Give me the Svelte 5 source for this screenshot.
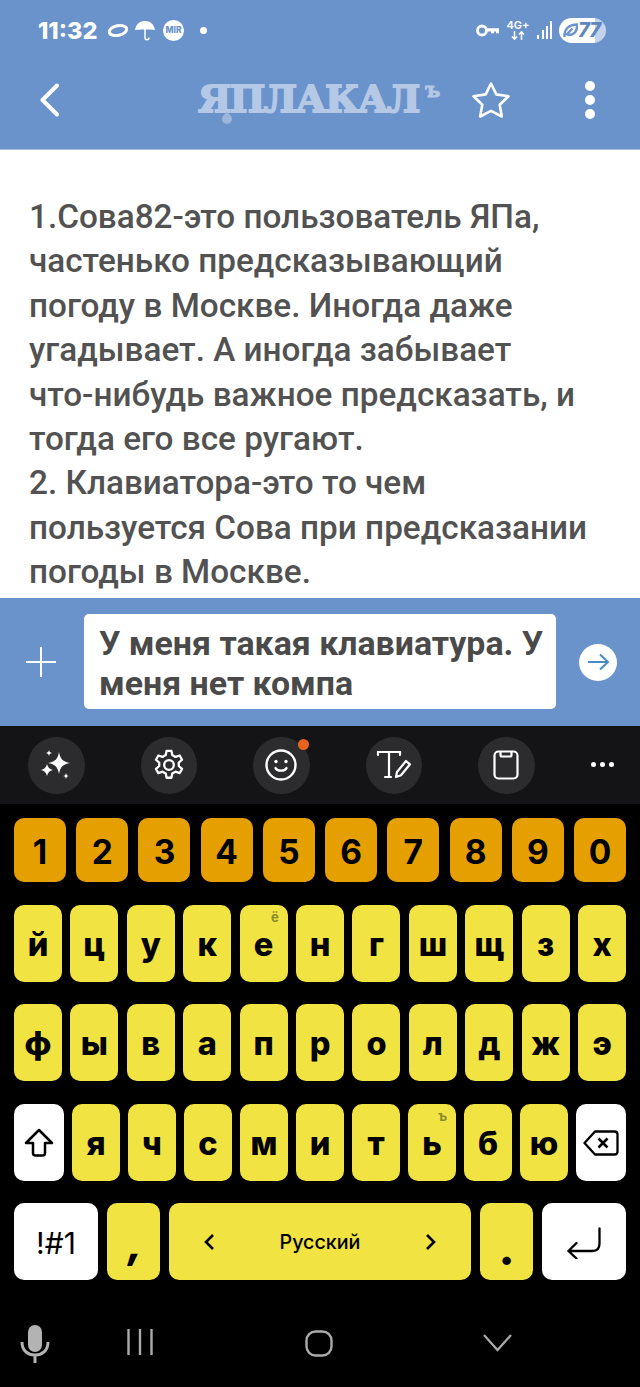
<script lang="ts">
    const digits = ["1", "2", "3", "4", "5", "6", "7", "8", "9", "0"];
    const row2 = ["й", "ц", "у", "к", "е", "н", "г", "ш", "щ", "з", "х"];
    const row3 = ["ф", "ы", "в", "а", "п", "р", "о", "л", "д", "ж", "э"];
    const row4 = ["я", "ч", "с", "м", "и", "т", "ь", "б", "ю"];
    const hints: Record<string, string> = {"е": "ё", "ь": "ъ"};
</script>

<div class="screen">
    <header class="top">
        <div class="status">
            <span class="time">11:32</span>
            <svg class="st-ring" width="22" height="15" viewBox="0 0 22 15"><ellipse cx="11" cy="7.500" rx="8.800" ry="4.800" transform="rotate(-12 11 7.500)" fill="none" stroke="#fff" stroke-width="3"/></svg>
            <svg class="st-umbrella" width="20" height="21" viewBox="0 0 20 21"><path d="M0 10C1 4 5 1 10 1s9 3 10 9c-3-.8-17-.8-20 0z" fill="#fff"/><path d="M10 8v9.500c0 3 4 3 4 0" fill="none" stroke="#fff" stroke-width="1.500"/></svg>
            <span class="st-mir">MIR</span>
            <span class="st-dot"></span>
            <span class="grow"></span>
            <svg class="st-key" width="23" height="13" viewBox="0 0 23 13"><circle cx="6" cy="6.500" r="4.500" fill="none" stroke="#fff" stroke-width="2.800"/><path d="M10 4.200h13v5h-3V7.500h-2v1.700h-3V7.500h-5z" fill="#fff"/></svg>
            <span class="st-net"><span>4G+</span><svg width="14" height="9" viewBox="0 0 14 9"><path d="M3.500 0v8M1 5.500l2.500 2.800L6 5.500M10.500 9V1M8 3.500l2.500-2.800L13 3.500" fill="none" stroke="#fff" stroke-width="1.500"/></svg></span>
            <svg class="st-signal" width="16" height="18" viewBox="0 0 16 18"><path d="M1 14h2v4H1zM6 9h2v9H6zM10 5h2v13h-2zM14 0h2v18h-2z" fill="#fff"/></svg>
            <div class="st-batt">
                <svg width="15" height="15" viewBox="0 0 15 15"><path d="M1.500 14C1 6 6 1.500 14 1.500c.5 7-3 11-9.500 10.500M3 12 9.500 5.500" fill="none" stroke="#6a93cc" stroke-width="2.400"/></svg>
                <span>77</span>
            </div>
        </div>
        <div class="bar">
            <svg class="back" width="21" height="34" viewBox="0 0 21 34"><path d="M18 2.500 3.500 17 18 31.500" fill="none" stroke="#fff" stroke-width="4" stroke-linecap="round" stroke-linejoin="round"/></svg>
            <div class="logo">
                <span class="logo-main">ЯПЛАКАЛ</span><span class="logo-sup">ъ</span>
                <span class="logo-drop"></span>
            </div>
            <svg class="star" width="40" height="38" viewBox="0 0 40 38"><path d="M20 2.500 25.300 13.400 37.500 15.200 28.700 23.700 30.800 35.500 20 29.900 9.200 35.500 11.300 23.700 2.500 15.200 14.700 13.400z" fill="none" stroke="#fff" stroke-width="2.600" stroke-linejoin="round"/></svg>
            <div class="more"><i></i><i></i><i></i></div>
        </div>
    </header>

    <main class="content">
        <p>1.Сова82-это пользователь ЯПа, частенько предсказывающий погоду в Москве. Иногда даже угадывает. А иногда забывает что-&#8288;нибудь важное предсказать, и тогда его все ругают.<br />2. Клавиатора-это то чем пользуется Сова при предсказании погоды в Москве.</p>
    </main>

    <div class="composer">
        <svg class="plus" width="30" height="30" viewBox="0 0 30 30"><path d="M15 0v30M0 15h30" stroke="#fff" stroke-width="2"/></svg>
        <div class="input">У меня такая клавиатура. У меня нет компа</div>
        <div class="send">
            <svg width="24" height="20" viewBox="0 0 24 20"><path d="M2 10h20M14 2.500 22 10l-8 7.500" fill="none" stroke="#4a8bc8" stroke-width="2"/></svg>
        </div>
    </div>

    <div class="toolbar">
        <div class="tool">
            <svg width="30" height="30" viewBox="0 0 30 30" fill="#fff"><path d="M18 2c1.200 7 4 9.800 11 11-7 1.200-9.800 4-11 11-1.200-7-4-9.800-11-11 7-1.200 9.800-4 11-11z"/><path d="M8 0c.5 2 1 2.500 3 3-2 .5-2.500 1-3 3-.5-2-1-2.500-3-3 2-.5 2.500-1 3-3zM6 14c.8 3.500 2.500 5.200 6 6-3.500.8-5.200 2.500-6 6-.8-3.500-2.500-5.200-6-6 3.500-.8 5.200-2.500 6-6zM25 23c.4 2 1 2.600 3 3-2 .4-2.600 1-3 3-.4-2-1-2.600-3-3 2-.4 2.600-1 3-3z"/></svg>
        </div>
        <div class="tool">
            <svg width="34" height="34" viewBox="0 0 24 24" fill="none" stroke="#fff" stroke-width="1.600"><circle cx="12" cy="12" r="3.400"/><path d="M10.300 2h3.400l.6 3 2.300 1.300 2.900-1 1.700 3-2.300 2v2.400l2.300 2-1.700 3-2.900-1-2.300 1.300-.6 3h-3.400l-.6-3-2.300-1.300-2.900 1-1.700-3 2.300-2v-2.400l-2.300-2 1.700-3 2.900 1 2.300-1.300z" stroke-linejoin="round"/></svg>
        </div>
        <div class="tool badge">
            <svg width="32" height="32" viewBox="0 0 32 32" fill="none" stroke="#fff" stroke-width="2.400"><circle cx="16" cy="16" r="14.500"/><circle cx="11" cy="12.500" r="1.700" fill="#fff" stroke="none"/><circle cx="21" cy="12.500" r="1.700" fill="#fff" stroke="none"/><path d="M10.500 19c1.500 3.500 9.500 3.500 11 0" stroke-linecap="round"/></svg>
        </div>
        <div class="tool">
            <svg width="36" height="30" viewBox="0 0 36 30" fill="none" stroke="#fff" stroke-width="2.200"><path d="M2 5V2h22v3M13 2v25M9 27h6" stroke-linecap="round"/><path d="M21 22 30 11l4 3.300-9 11-5 1.700z" stroke-linejoin="round"/></svg>
        </div>
        <div class="tool">
            <svg width="26" height="30" viewBox="0 0 26 30" fill="none" stroke="#fff" stroke-width="2.200"><rect x="1.500" y="1.500" width="23" height="27" rx="4"/><path d="M7.500 1.500v3.500c0 1 .5 1.500 1.500 1.500h8c1 0 1.500-.5 1.500-1.500v-3.500"/></svg>
        </div>
        <div class="tool-more"><i></i><i></i><i></i></div>
    </div>

    <div class="keyboard">
        <div class="row nums">
            {#each digits as d}
                <div class="key num">{d}</div>
            {/each}
        </div>
        <div class="row letters">
            {#each row2 as k}
                <div class="key">{k}{#if hints[k]}<span class="hint">{hints[k]}</span>{/if}</div>
            {/each}
        </div>
        <div class="row letters">
            {#each row3 as k}
                <div class="key">{k}</div>
            {/each}
        </div>
        <div class="row third">
            <div class="key white side">
                <svg width="30" height="30" viewBox="0 0 30 30"><path d="M15 2 28 15h-7v10c0 1.500-1 2.500-2.500 2.500h-7C10 27.500 9 26.500 9 25V15H2z" fill="none" stroke="#000" stroke-width="2.500" stroke-linejoin="round"/></svg>
            </div>
            {#each row4 as k}
                <div class="key">{k}{#if hints[k]}<span class="hint">{hints[k]}</span>{/if}</div>
            {/each}
            <div class="key white side">
                <svg width="36" height="26" viewBox="0 0 36 26" fill="none" stroke="#000" stroke-width="2.300"><path d="M12 1.500h19.500c2 0 3 1 3 3v17c0 2-1 3-3 3H12L1.500 13z" stroke-linejoin="round"/><path d="M15.500 8.500l9 9M24.500 8.500l-9 9" stroke-width="2.600"/></svg>
            </div>
        </div>
        <div class="row bottom">
            <div class="key white fn">!#1</div>
            <div class="key punct comma">,</div>
            <div class="key space">
                <svg width="12" height="18" viewBox="0 0 12 18"><path d="M10 2 3 9l7 7" fill="none" stroke="#000" stroke-width="2.600"/></svg>
                <span>Русский</span>
                <svg width="12" height="18" viewBox="0 0 12 18"><path d="M2 2l7 7-7 7" fill="none" stroke="#000" stroke-width="2.600"/></svg>
            </div>
            <div class="key punct dot">.</div>
            <div class="key white enter">
                <svg width="36" height="32" viewBox="0 0 36 32" fill="none" stroke="#000" stroke-width="2.300" stroke-linecap="round"><path d="M33.500 1.500v15c0 5-2 7.500-7 7.500H3M10.500 16 2.500 24l8 7.500"/></svg>
            </div>
        </div>
    </div>

    <nav class="sysnav">
        <svg class="mic" width="30" height="38" viewBox="0 0 30 38"><rect x="8" y="0" width="14" height="27" rx="7" fill="#b3b3b3"/><path d="M2 17c0 9 6 13 13 13s13-4 13-13M15 30v8" fill="none" stroke="#b3b3b3" stroke-width="3"/></svg>
        <svg class="recents" width="26" height="26" viewBox="0 0 26 26"><path d="M1.500 0v26M13 0v26M24.500 0v26" stroke="#aaa" stroke-width="2.400"/></svg>
        <svg class="home" width="28" height="27" viewBox="0 0 28 27"><rect x="1.500" y="1.500" width="25" height="24" rx="9" fill="none" stroke="#aaa" stroke-width="2.400"/></svg>
        <svg class="hide" width="29" height="18" viewBox="0 0 29 18"><path d="M1 1l13.500 15L28 1" fill="none" stroke="#aaa" stroke-width="2.200"/></svg>
    </nav>
</div>

<style>
:global(body) {
    margin: 0;
    background: #000;
}

.screen {
    width: 640px;
    height: 1387px;
    display: flex;
    flex-direction: column;
    overflow: hidden;
    font-family: Roboto, sans-serif;
}

.top {
    height: 150px;
    box-sizing: border-box;
    background: #6a93cc;
    border-bottom: 1px solid #a9bedd;
    flex: none;
}

.status {
    height: 60px;
    display: flex;
    align-items: center;
    padding: 0 34px 0 38px;
    color: #fff;
}

.grow { flex: 1; }

.time {
    font: 800 23.500px Inter, sans-serif;
    width: 58px;
    margin-right: 11px;
}

.st-ring { margin-right: 6px; }
.st-umbrella { margin-right: 8px; }

.st-mir {
    width: 21px;
    height: 21px;
    border-radius: 50%;
    background: #fff;
    color: #6a93cc;
    font: 800 8.500px/21px Inter, sans-serif;
    text-align: center;
    margin-right: 16px;
}

.st-dot {
    width: 7px;
    height: 7px;
    border-radius: 50%;
    background: #fff;
}

.st-key { margin-right: 9px; }

.st-net {
    display: flex;
    flex-direction: column;
    align-items: center;
    font: 600 11px/11px Inter, sans-serif;
    width: 20px;
    margin-right: 8px;
}

.st-signal { margin-right: 7px; }

.st-batt {
    width: 47px;
    height: 25px;
    border-radius: 13px;
    background: linear-gradient(90deg, #fff 76%, #c4d3ea 76%);
    display: flex;
    align-items: center;
    padding-left: 4px;
    box-sizing: border-box;
    color: #5f86be;
    font: italic 800 20px Inter, sans-serif;
    letter-spacing: -1px;
}

.bar {
    height: 89px;
    display: flex;
    align-items: flex-start;
    padding-left: 39px;
    position: relative;
}

.back {
    margin-top: 23px;
    margin-right: 138px;
}

.logo {
    position: relative;
    width: 243px;
    margin-top: 17px;
    color: #b5c8e5;
    white-space: nowrap;
    font-family: "DejaVu Serif", serif;
    font-weight: 700;
    line-height: 44px;
    -webkit-text-stroke: 1.800px #b5c8e5;
}

.logo-main {
    font-size: 37px;
    letter-spacing: -1.500px;
    display: inline-block;
    transform: scaleX(1.020);
    transform-origin: left;
}

.logo-sup {
    position: absolute;
    left: 227px;
    top: -9px;
    font-size: 20px;
    -webkit-text-stroke: 0.800px #b5c8e5;
}

.logo-drop {
    position: absolute;
    left: 24px;
    top: 37px;
    width: 10px;
    height: 10px;
    border-radius: 0 50% 50% 50%;
    transform: rotate(45deg);
    background: #9db6da;
}

.star {
    margin-top: 21px;
    margin-left: 30px;
}

.more {
    display: flex;
    flex-direction: column;
    gap: 4px;
    margin-top: 21px;
    margin-left: 74px;
}

.more i {
    width: 10px;
    height: 10px;
    border-radius: 50%;
    background: #fff;
}

.content {
    height: 448px;
    flex: none;
    background: #fff;
    box-sizing: border-box;
    padding: 45px 40px 0 29px;
}

.content p {
    margin: 0;
    font: 500 33.300px/44.400px Roboto, sans-serif;
    color: #525252;
}

.composer {
    height: 128px;
    flex: none;
    background: #6a93cc;
    display: flex;
    align-items: center;
    padding-left: 26px;
    box-sizing: border-box;
}

.plus { margin-right: 28px; }

.input {
    width: 472px;
    height: 95px;
    margin-top: -1px;
    box-sizing: border-box;
    background: #fff;
    border-radius: 5px;
    padding: 10px 10px 10px 15px;
    font: 700 33.900px/40px Roboto, sans-serif;
    color: #4a4a4a;
}

.send {
    width: 38px;
    height: 37px;
    border-radius: 50%;
    background: #fff;
    margin-left: 23px;
    display: flex;
    align-items: center;
    justify-content: center;
}

.toolbar {
    height: 78px;
    flex: none;
    background: #141416;
    display: flex;
    align-items: center;
    padding-left: 28px;
    gap: 56px;
    box-sizing: border-box;
}

.tool {
    width: 56.500px;
    height: 57px;
    border-radius: 50%;
    background: #2c2c2e;
    display: flex;
    align-items: center;
    justify-content: center;
    position: relative;
}

.badge::after {
    content: "";
    position: absolute;
    right: 1px;
    top: 2px;
    width: 11px;
    height: 11px;
    border-radius: 50%;
    background: #e8641e;
}

.tool-more {
    display: flex;
    gap: 4px;
    margin-top: -2px;
}

.tool-more i {
    width: 5px;
    height: 5px;
    border-radius: 50%;
    background: #fff;
}

.keyboard {
    flex: none;
    background: #000;
    padding: 14px 14px 0;
    display: flex;
    flex-direction: column;
    gap: 22.500px;
}

.row {
    display: flex;
    height: 77px;
}

.nums { height: 64px; gap: 10.200px; }
.letters { gap: 8.400px; }
.third { gap: 8px; }
.bottom { gap: 9px; }

.key {
    flex: 1;
    position: relative;
    display: flex;
    align-items: center;
    justify-content: center;
    background: #f1e341;
    border-radius: 10px;
    color: #000;
    font: 800 32.500px Inter, sans-serif;
    padding-top: 2px;
    box-sizing: border-box;
}

.num {
    background: #e5a000;
    font-size: 33.500px;
    font-weight: 700;
    padding-top: 3px;
}

.hint {
    position: absolute;
    right: 9px;
    top: 4px;
    font-size: 13px;
    font-weight: 700;
    color: #8b8a2e;
}

.white { background: #fff; }
.side { flex: none; width: 50px; }

.fn {
    flex: none;
    width: 84px;
    font-size: 30px;
    font-weight: 400;
}

.punct {
    flex: none;
    width: 53px;
    font-size: 42px;
    font-weight: 900;
}

.comma { padding: 4px 0 0 3px; font-size: 38px; font-style: italic; }
.dot { padding-top: 16px; }

.space {
    justify-content: space-between;
    padding: 0 34px;
    font-size: 19.700px;
    font-weight: 500;
}

.enter { flex: none; width: 84px; }

.sysnav {
    flex: 1;
    position: relative;
    background: #000;
}

.sysnav svg { position: absolute; }
.mic { left: 20px; top: 45px; }
.recents { left: 127px; top: 49px; }
.home { left: 305px; top: 50px; }
.hide { left: 483px; top: 54px; }
</style>
